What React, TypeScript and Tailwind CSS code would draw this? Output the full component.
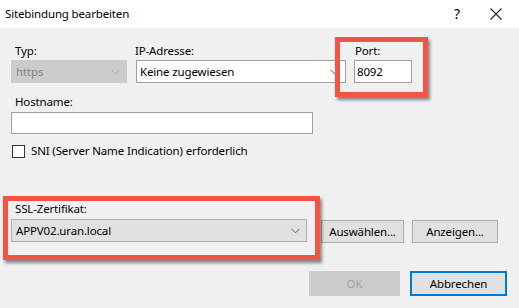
import React from "react";

const Chevron = ({ color }: { color: string }) => (
  <svg width="9" height="6" viewBox="0 0 9 6" className="shrink-0">
    <path d="M0.5 0.8 L4.5 4.8 L8.5 0.8" fill="none" stroke={color} strokeWidth="1" />
  </svg>
);

export default function App() {
  return (
    <div
      className="w-[519px] h-[308px] bg-[#f0f0f0] text-[11.5px] tracking-[-0.15px] leading-[16px] text-black overflow-hidden"
      style={{ fontFamily: '"Noto Sans", sans-serif' }}
    >
      {/* Title bar */}
      <div className="h-[28px] bg-white flex items-center justify-between pl-[5px]">
        <span className="mt-[-1px]">Sitebindung bearbeiten</span>
        <div className="flex items-center h-full">
          <span className="text-[14px] w-[20px] text-center mr-[23px] mt-[-1px]">?</span>
          <svg width="12" height="12" viewBox="0 0 12 12" className="mr-[17px]">
            <path d="M0.5 0.5 L11.5 11.5 M11.5 0.5 L0.5 11.5" stroke="#222" strokeWidth="1.1" />
          </svg>
        </div>
      </div>

      <div className="pl-[11px]">
        {/* Row 1 */}
        <div className="flex mt-[15px]">
          <div className="w-[116px] flex flex-col">
            <span className="ml-[4px]">Typ:</span>
            <div className="mt-[1px] h-[23px] bg-[#cccccc] border border-[#cccccc] flex items-center justify-between pl-[4px] pr-[6px] text-[#838383]">
              <span>https</span>
              <Chevron color="#a8a8a8" />
            </div>
          </div>
          <div className="ml-[9px] w-[210px] flex flex-col">
            <span className="ml-[-1px]">IP-Adresse:</span>
            <div className="mt-[1px] h-[23px] bg-white border border-[#a0a0a0] flex items-center justify-between pl-[3px] pr-[6px]">
              <span>Keine zugewiesen</span>
              <Chevron color="#606060" />
            </div>
          </div>
          <div className="ml-[8px] w-[58px] flex flex-col relative">
            <span className="ml-[1px]">Port:</span>
            <div className="mt-[1px] h-[23px] bg-white border border-[#a0a0a0] flex items-center pl-[2px]">
              <span>8092</span>
            </div>
            <div className="absolute left-[-19px] right-[-16px] top-[-6px] bottom-[-14px] border-[5px] border-[#f25546] shadow-[2px_3px_3px_rgba(0,0,0,0.45)] pointer-events-none" />
          </div>
        </div>

        {/* Hostname */}
        <div className="mt-[11px] flex flex-col w-[302px]">
          <span className="ml-[4px]">Hostname:</span>
          <div className="mt-[2px] h-[22px] bg-white border border-[#a0a0a0]" />
        </div>

        {/* SNI checkbox */}
        <div className="mt-[9px] flex items-center h-[16px]">
          <div className="ml-[1px] w-[13px] h-[13px] bg-white border border-[#333333]" />
          <span className="ml-[6px]">SNI (Server Name Indication) erforderlich</span>
        </div>

        {/* SSL */}
        <div className="mt-[42px] flex items-end">
          <div className="w-[296px] flex flex-col relative">
            <span className="ml-[4px]">SSL-Zertifikat:</span>
            <div className="mt-[2px] h-[23px] bg-[#e1e1e1] border border-[#adadad] flex items-center justify-between pl-[4px] pr-[6px]">
              <span>APPV02.uran.local</span>
              <Chevron color="#606060" />
            </div>
            <div className="absolute left-[-8px] right-[-13px] top-[-5px] bottom-[-18px] border-[5px] border-[#f25546] shadow-[2px_3px_3px_rgba(0,0,0,0.45)] pointer-events-none" />
          </div>
          <div className="ml-[14px] w-[83px] h-[23px] bg-[#e1e1e1] border border-[#adadad] flex items-center justify-center mb-[-1px]">
            Auswählen...
          </div>
          <div className="ml-[8px] w-[86px] h-[23px] bg-[#e1e1e1] border border-[#adadad] flex items-center justify-center mb-[-1px]">
            Anzeigen...
          </div>
        </div>

        {/* OK / Cancel */}
        <div className="mt-[29px] flex justify-end pr-[12px]">
          <div className="w-[91px] h-[25px] bg-[#cccccc] border border-[#cccccc] flex items-center justify-center text-[#a0a0a0]">
            OK
          </div>
          <div className="ml-[10px] w-[97px] h-[25px] bg-[#e1e1e1] border-2 border-[#0078d7] flex items-center justify-center">
            Abbrechen
          </div>
        </div>
      </div>
    </div>
  );
}
